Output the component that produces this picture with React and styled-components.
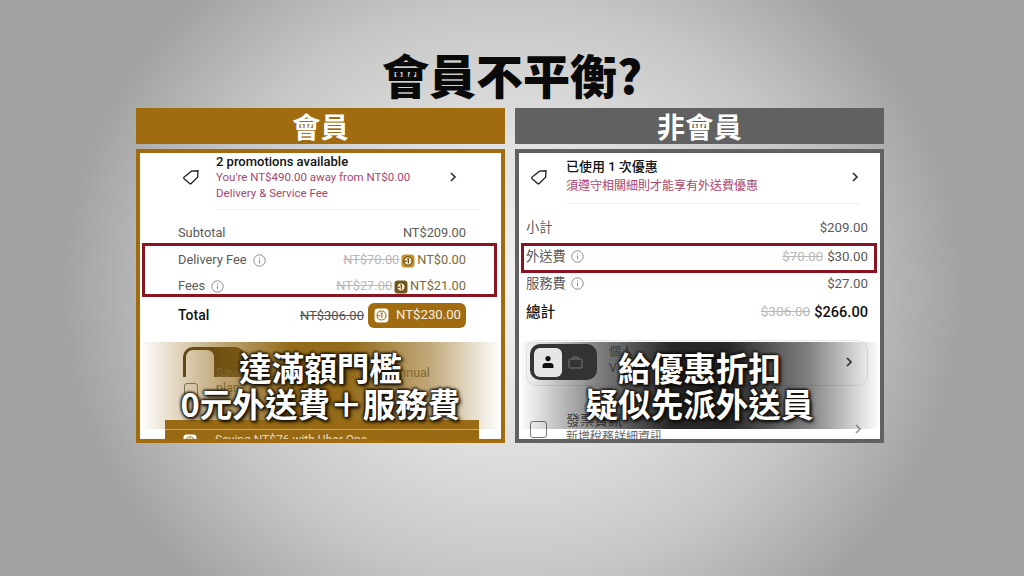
import React from "react";
import styled, { createGlobalStyle } from "styled-components";

const GOLD = "#a06c0f";
const GRAY = "#616161";
const CJK = `"Noto Sans CJK TC", "Roboto", sans-serif`;
const UI = `"Roboto", "Noto Sans CJK TC", sans-serif`;

const Global = createGlobalStyle`
  html, body { margin: 0; padding: 0; }
  body { font-family: ${UI}; }
`;
const Page = styled.div`
  width: 1024px; height: 576px; overflow: hidden; box-sizing: border-box;
  background: radial-gradient(ellipse 450px 410px at 512px 290px, #f2f2f2 0%, #e2e2e2 35%, #c6c6c6 70%, #a2a2a2 100%);
  display: flex; flex-direction: column; align-items: center;
`;
const Title = styled.h1`
  margin: 0; height: 108px; padding-top: 41px; box-sizing: border-box;
  font: 900 47px/66px ${CJK}; color: #0a0a0a; white-space: nowrap;
`;
const Columns = styled.div`
  display: grid; grid-template-columns: 369px 369px; gap: 10px; margin-right: 4px;
`;
const Column = styled.section`
  display: flex; flex-direction: column; gap: 5px;
`;
const Header = styled.header`
  height: 36px; background: ${p => p.$c}; color: #fff;
  display: flex; align-items: center; justify-content: center;
  font: 700 28px/36px ${CJK}; letter-spacing: .3px;
`;
const Shot = styled.div`
  position: relative; height: 294px; box-sizing: border-box; overflow: hidden;
  border: 4px solid ${p => p.$c}; background: #fff;
`;
const Promo = styled.div`
  height: ${p => p.$h}px; margin: 0 ${p => p.$mr}px 0 ${p => p.$ml}px; box-sizing: border-box;
  display: grid; grid-template-columns: ${p => p.$tagw}px 1fr; position: relative;
`;
const Tag = styled.svg`
  width: 18px; height: 18px; fill: none; stroke: #222; stroke-width: 1.3;
  margin: 15px 0 0 ${p => p.$ml}px;
`;
const PromoText = styled.div`
  display: flex; flex-direction: column; padding-bottom: ${p => p.$pb}px;
  border-bottom: 1px solid #f0f0f0; align-self: end;
`;
const PromoTitle = styled.div`
  font: 500 ${p => p.$s}px/${p => p.$lh}px ${UI}; color: #111;
`;
const PromoNote = styled.div`
  font: 400 ${p => p.$s}px/${p => p.$lh}px ${UI}; color: #a8466f; white-space: nowrap;
`;
const Chev = styled.svg`
  width: 10px; height: 12px; fill: none; stroke: ${p => p.$c || "#333"}; stroke-width: 1.7;
`;
const ChevSlot = styled.div`
  position: absolute; top: ${p => p.$t}px; right: ${p => p.$r}px; line-height: 0;
`;
const Rows = styled.div`
  padding: ${p => p.$pt}px ${p => p.$pr}px 0 ${p => p.$pl}px; display: flex; flex-direction: column;
`;
const Row = styled.div`
  height: ${p => p.$h || 27}px; display: flex; align-items: center; justify-content: space-between;
  font: ${p => (p.$strong ? 500 : 400)} ${p => p.$s || 12.8}px/1 ${UI};
  color: ${p => (p.$strong ? "#111" : "#5a5a5a")};
  margin-top: ${p => p.$mt || 0}px;
`;
const Label = styled.span`
  display: inline-flex; align-items: center; gap: ${p => p.$gap || 6}px;
`;
const Amount = styled.span`
  display: inline-flex; align-items: center; gap: ${p => p.$gap || 2}px; white-space: nowrap;
  color: ${p => p.$c || "inherit"}; font-size: ${p => (p.$s ? `${p.$s}px` : "inherit")};
`;
const Old = styled.s`
  color: ${p => p.$c || "#b8b8b8"}; font-weight: 400; font-size: ${p => (p.$s ? `${p.$s}px` : "inherit")};
`;
const Info = styled.svg`
  width: 13px; height: 13px; fill: none; stroke: #8a8a8a; stroke-width: 1;
`;
const OneIcon = styled.svg`
  width: ${p => p.$s}px; height: ${p => p.$s}px; flex: none;
`;
const Pill = styled.span`
  display: inline-flex; align-items: center; gap: 7px; height: 25px; width: 98px; padding-left: 6px; box-sizing: border-box;
  background: ${GOLD}; color: #f6efe0; border-radius: 6px; font-weight: 400; margin-left: 1px;
  font-size: 13.2px;
`;
const Highlight = styled.div`
  position: absolute; left: ${p => p.$l}px; right: ${p => p.$r}px; top: ${p => p.$t}px; height: ${p => p.$h}px;
  box-sizing: border-box; border: 3px solid #8a1420; pointer-events: none;
`;
const Lower = styled.div`
  position: absolute; left: 0; right: 0; top: 187px; bottom: 0; overflow: hidden;
`;
const OptionCard = styled.div`
  position: absolute; left: ${p => p.$l}px; right: ${p => p.$r}px; top: ${p => p.$t}px; height: ${p => p.$h}px;
  box-sizing: border-box; border: 1px solid #e8e8e8; border-radius: 10px;
`;
const Toggle = styled.div`
  position: absolute; left: 11px; top: 191px; width: 67px; height: 36px; border-radius: 10px; background: #333;
  display: flex; align-items: center; padding: 0 4px; box-sizing: border-box; gap: 6px;
`;
const ToggleOn = styled.div`
  width: 28px; height: 29px; border-radius: 6px; background: #e6e6e6; display: flex; align-items: center; justify-content: center;
`;
const GoldTab = styled.div`
  position: absolute; left: 43px; top: 7px; width: 62px; height: 30px; background: #4a3a18;
  border-radius: 10px 10px 0 0; box-sizing: border-box; padding: 3px 0 0 3px;
`;
const GoldTabOn = styled.div`
  width: 28px; height: 27px; background: #fff; border-radius: 7px 7px 0 0;
`;
const Check = styled.div`
  position: absolute; left: ${p => p.$l}px; top: ${p => p.$t}px; width: ${p => p.$s}px; height: ${p => p.$s}px;
  border: 1.5px solid #777; border-radius: 3px; box-sizing: border-box;
`;
const SmallText = styled.div`
  position: absolute; left: ${p => p.$l}px; top: ${p => p.$t}px; font: 400 ${p => p.$s || 12}px/1 ${UI};
  color: ${p => p.$c || "#666"}; white-space: nowrap;
`;
const Band = styled.div`
  position: absolute; left: 0; right: 0; top: 189px; height: 87px;
  background: linear-gradient(90deg, ${p => p.$c}00 0%, ${p => p.$c}90 22%, ${p => p.$c}f4 42%, ${p => p.$c}f4 58%, ${p => p.$c}90 80%, ${p => p.$c}00 100%);
`;
const UberBar = styled.div`
  position: absolute; left: 25px; right: 22px; top: 267px; height: 30px; background: #986a14;
  box-sizing: border-box; overflow: hidden;
`;
const UberLine = styled.div`
  height: 1px; margin-top: 9px; background: #c9a766;
`;
const UberRow = styled.div`
  display: flex; align-items: flex-start; gap: 18px; padding: 4px 0 0 18px;
  font: 400 12px/1 ${UI}; color: #eadcc0; white-space: nowrap;
`;
const Caption = styled.div`
  position: absolute; left: 0; right: 0; top: 196px; text-align: center; color: #fff;
  font: 700 32.6px/36px ${CJK}; white-space: nowrap;
  text-shadow: 0 0 3px rgba(20,15,5,.9), 0 0 3px rgba(20,15,5,.9), 1px 1px 3px rgba(20,15,5,.9), -1px -1px 3px rgba(20,15,5,.7), 2px 2px 4px rgba(0,0,0,.8);
`;

const TagIcon = ({ ml }) => (
  <Tag $ml={ml} viewBox="0 0 18 18"><path d="M2.2 9 9.5 3.2 16 2.8 15.6 9.2 9.2 15.4a1.2 1.2 0 0 1-1.6 0L2.1 10.8a1.2 1.2 0 0 1 .1-1.8Z" /></Tag>
);
const Chevron = ({ c }) => <Chev $c={c} viewBox="0 0 10 12"><path d="M3 2l4 4-4 4" /></Chev>;
const InfoIcon = () => (
  <Info viewBox="0 0 13 13"><circle cx="6.5" cy="6.5" r="5.7" /><path d="M6.5 5.6v3.8M6.5 3.4v1.1" /></Info>
);
const One = ({ s = 14, bg = "#c4902a", ring = "#f8e8c0", fg = "#4a340c" }) => (
  <OneIcon $s={s} viewBox="0 0 14 14">
    <rect x=".5" y=".5" width="13" height="13" rx="3.2" fill={bg} />
    <circle cx="7" cy="7" r="4.2" fill={ring} stroke={fg} strokeWidth="1" />
    <path d="M6.2 5.2 7.4 4.6V9.4M3.2 7.2h3" fill="none" stroke={fg} strokeWidth="1" />
  </OneIcon>
);

export default function App() {
  return (
    <Page>
      <Global />
      <Title>會員不平衡?</Title>
      <Columns>
        <Column>
          <Header $c={GOLD}>會員</Header>
          <Shot $c={GOLD}>
            <Promo $h={57} $ml={38} $mr={21} $tagw={38}>
              <TagIcon ml={4} />
              <PromoText $pb={8}>
                <PromoTitle $s={13} $lh={16}>2 promotions available</PromoTitle>
                <PromoNote $s={11.5} $lh={15.5}>You're NT$490.00 away from NT$0.00</PromoNote>
                <PromoNote $s={11.5} $lh={15.5}>Delivery &amp; Service Fee</PromoNote>
              </PromoText>
              <ChevSlot $t={18} $r={22}><Chevron /></ChevSlot>
            </Promo>
            <Rows $pt={10} $pl={38} $pr={35}>
              <Row>
                <span>Subtotal</span>
                <Amount>NT$209.00</Amount>
              </Row>
              <Row>
                <Label>Delivery Fee <InfoIcon /></Label>
                <Amount $c="#7d6a3a"><Old>NT$70.00</Old><One /> NT$0.00</Amount>
              </Row>
              <Row $h={25}>
                <Label>Fees <InfoIcon /></Label>
                <Amount $c="#7d6a3a"><Old>NT$27.00</Old><One bg="#74591f" /> NT$21.00</Amount>
              </Row>
              <Row $strong $s={14} $mt={3} $h={26}>
                <span>Total</span>
                <Amount $gap={3}>
                  <Old $c="#555" $s={13}>NT$306.00</Old>
                  <Pill><One s={15} bg="#fff" ring="#fff" fg={GOLD} /> NT$230.00</Pill>
                </Amount>
              </Row>
            </Rows>
            <Highlight $l={2} $r={4} $t={90} $h={54} />
            <Lower>
              <GoldTab><GoldTabOn /></GoldTab>
              <SmallText $l={76} $t={27} $s={12.5}>Save more with Uber One on an annual</SmallText>
              <SmallText $l={76} $t={42} $s={12.5}>plan</SmallText>
              <Check $l={44} $t={43} $s={14} />
            </Lower>
            <Band $c="#8f6410" />
            <UberBar>
              <UberLine />
              <UberRow><One s={14} bg="#fff" ring="#fff" fg="#986a14" />Saving NT$76 with Uber One</UberRow>
            </UberBar>
            <Caption>達滿額門檻<br />0元外送費＋服務費</Caption>
          </Shot>
        </Column>
        <Column>
          <Header $c={GRAY}>非會員</Header>
          <Shot $c={GRAY}>
            <Promo $h={51} $ml={6} $mr={20} $tagw={41}>
              <TagIcon ml={5} />
              <PromoText $pb={8}>
                <PromoTitle $s={13} $lh={20}>已使用 1 次優惠</PromoTitle>
                <PromoNote $s={12} $lh={18}>須遵守相關細則才能享有外送費優惠</PromoNote>
              </PromoText>
              <ChevSlot $t={18} $r={0}><Chevron /></ChevSlot>
            </Promo>
            <Rows $pt={9} $pl={7} $pr={12}>
              <Row $h={29} $s={13.3}>
                <span>小計</span>
                <Amount>$209.00</Amount>
              </Row>
              <Row $h={29} $s={13.3}>
                <Label $gap={5}>外送費 <InfoIcon /></Label>
                <Amount $gap={4}><Old>$70.00</Old> <span>$30.00</span></Amount>
              </Row>
              <Row $h={26} $s={13.3}>
                <Label $gap={5}>服務費 <InfoIcon /></Label>
                <Amount>$27.00</Amount>
              </Row>
              <Row $strong $s={14.6} $h={30}>
                <span>總計</span>
                <Amount $gap={4}><Old $s={13.6}>$306.00</Old> $266.00</Amount>
              </Row>
            </Rows>
            <Highlight $l={2} $r={3} $t={90} $h={30} />
            <Lower>
              <OptionCard $l={7} $r={12} $t={0} $h={46} />
              <SmallText $l={90} $t={6} $s={12}>個人</SmallText>
              <SmallText $l={90} $t={22} $s={12}>V</SmallText>
              <ChevSlot $t={16} $r={26}><Chevron /></ChevSlot>
              <Check $l={11} $t={81} $s={17} />
              <SmallText $l={47} $t={73} $s={14} $c="#555">發票資訊</SmallText>
              <SmallText $l={47} $t={91} $s={12} $c="#666">新增稅務詳細資訊</SmallText>
              <ChevSlot $t={83} $r={17}><Chevron c="#999" /></ChevSlot>
            </Lower>
            <Band $c="#1e1e1e" />
            <Toggle>
              <ToggleOn>
                <svg width="14" height="14" viewBox="0 0 14 14"><circle cx="7" cy="3.6" r="2.6" fill="#111" /><path d="M1.5 13v-2.2A3 3 0 0 1 4.5 8h5a3 3 0 0 1 3 2.8V13Z" fill="#111" /></svg>
              </ToggleOn>
              <svg width="15" height="14" viewBox="0 0 15 14" fill="none" stroke="#777" strokeWidth="1"><rect x="1" y="4" width="13" height="9" rx="1" /><path d="M5 4V2h5v2" /></svg>
            </Toggle>
            <Caption>給優惠折扣<br />疑似先派外送員</Caption>
          </Shot>
        </Column>
      </Columns>
    </Page>
  );
}
